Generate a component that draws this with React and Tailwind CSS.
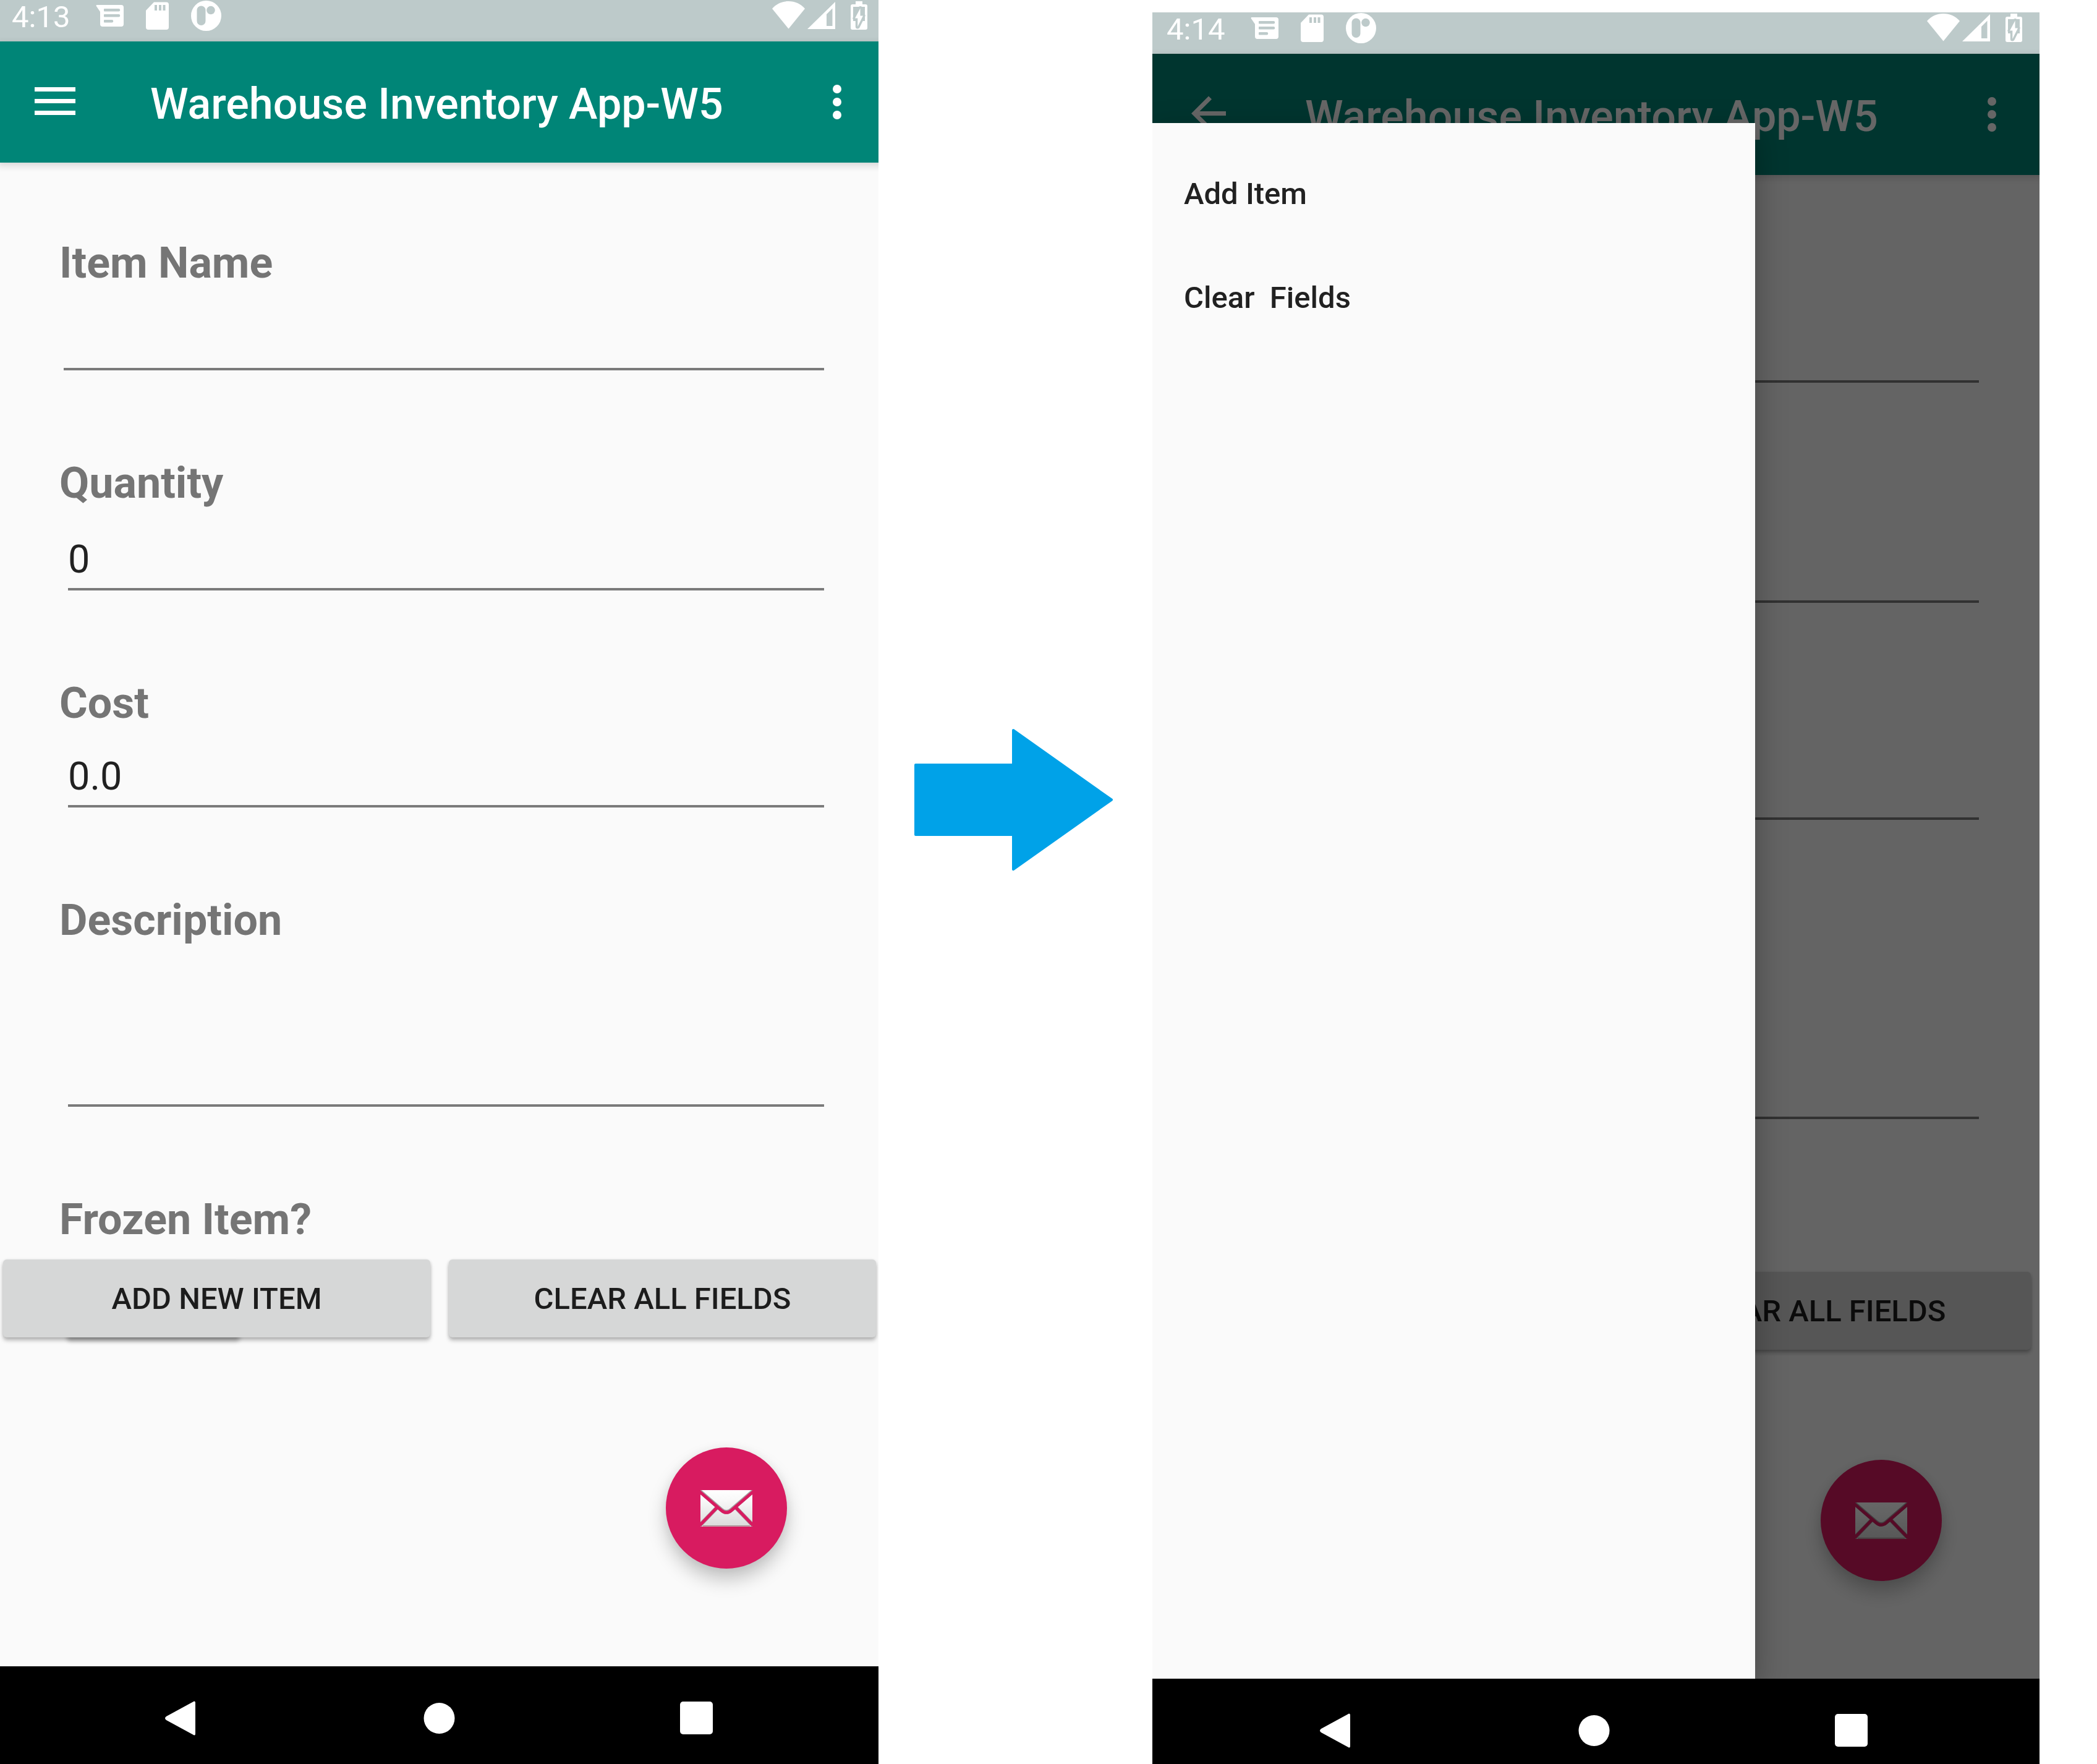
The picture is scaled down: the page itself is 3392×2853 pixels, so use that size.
import { useId } from "react";

function MessageIcon() {
  return (
    <svg className="h-[52px] w-[45px]" viewBox="0 0 45 52" aria-hidden="true">
      <path fill="#fff" d="M1 8H41a4 4 0 0 1 4 4V39a4 4 0 0 1-4 4H11a4 4 0 0 1-4-4V19L0.500 9.500Z" />
      <path
        fill="#bdcaca"
        d="M14 14h23a1.500 1.500 0 0 1 0 4.500H14a1 1 0 0 1-1-1V15a1 1 0 0 1 1-1ZM14 23h23a1.500 1.500 0 0 1 0 4.500H14a1 1 0 0 1-1-1V24a1 1 0 0 1 1-1ZM14 32h12a1.500 1.500 0 0 1 0 4.500H14a1 1 0 0 1-1-1V33a1 1 0 0 1 1-1Z"
      />
    </svg>
  );
}

function SdCardIcon() {
  return (
    <svg className="h-[52px] w-[37px]" viewBox="0 0 37 52" aria-hidden="true">
      <path fill="#fff" d="M13 3.500H33a4 4 0 0 1 4 4V44a4 4 0 0 1-4 4H4a4 4 0 0 1-4-4V17Z" />
      <path fill="#bdcaca" d="M14 8h4v9h-4ZM21 8h4v9h-4ZM27.500 8h4v9h-4Z" />
    </svg>
  );
}

function PBadgeIcon() {
  return (
    <svg className="h-[52px] w-[49px]" viewBox="0 0 49 52" aria-hidden="true">
      <circle cx="24.500" cy="25.500" r="24.500" fill="#fff" />
      <rect x="9.500" y="9.500" width="14" height="31.500" rx="7" fill="#bdcaca" />
      <circle cx="32" cy="16.500" r="6.800" fill="#bdcaca" />
    </svg>
  );
}

function WifiIcon() {
  return (
    <svg className="h-[52px] w-[53px]" viewBox="0 0 53 52" aria-hidden="true">
      <path fill="#fff" d="M0 14C7 6 16 2 26.500 2S46 6 53 14L26.500 46.500Z" />
    </svg>
  );
}

function SignalIcon() {
  return (
    <svg className="h-[52px] w-[45px]" viewBox="0 0 45 52" aria-hidden="true">
      <path fill="#fff" fillRule="evenodd" d="M45 3V47H0ZM40.500 13.500L31 23V42H40.500Z" />
    </svg>
  );
}

function BatteryIcon() {
  return (
    <svg className="h-[52px] w-[27px]" viewBox="0 0 27 52" aria-hidden="true">
      <path
        fill="#fff"
        fillRule="evenodd"
        d="M8 2H19V7H24a3 3 0 0 1 3 3V45a3 3 0 0 1-3 3H3a3 3 0 0 1-3-3V10a3 3 0 0 1 3-3H8ZM4 11V34H23V11Z"
      />
      <path
        d="M15.500 13.500L7 29.500H11.300V43L20 25.500H15.500Z"
        fill="#fff"
        stroke="#bdcaca"
        strokeWidth="7"
        strokeLinejoin="round"
        paintOrder="stroke"
      />
    </svg>
  );
}

function MenuIcon() {
  return (
    <svg className="h-[66px] w-[66px]" viewBox="0 0 66 66" aria-hidden="true">
      <path fill="#fff" d="M0 9H66V16H0ZM0 28H66V35H0ZM0 47H66V54H0Z" />
    </svg>
  );
}

function BackIcon() {
  return (
    <svg className="h-[66px] w-[66px]" viewBox="0 0 66 66" aria-hidden="true">
      <path fill="#fff" d="M59 28V35H16.400L36 54.600L31 59.500L3 31.500L31 3.500L36 8.400L16.400 28Z" />
    </svg>
  );
}

function MoreIcon() {
  return (
    <svg className="h-[66px] w-[14px]" viewBox="0 0 14 66" aria-hidden="true">
      <circle cx="7" cy="12" r="7" fill="#fff" />
      <circle cx="7" cy="33" r="7" fill="#fff" />
      <circle cx="7" cy="54" r="7" fill="#fff" />
    </svg>
  );
}

function EnvelopeIcon() {
  const id = useId();
  return (
    <svg className="h-[59px] w-[84px]" viewBox="0 0 84 59" aria-hidden="true">
      <defs>
        <linearGradient id={id} x1="0" y1="0" x2="0" y2="1">
          <stop offset="0" stopColor="#ffffff" />
          <stop offset="0.300" stopColor="#f8f8f8" />
          <stop offset="1" stopColor="#dadada" />
        </linearGradient>
      </defs>
      <rect width="84" height="59" fill={`url(#${id})`} />
      <path d="M4 57.800H80" stroke="#a9898f" strokeWidth="1.500" />
      <path
        d="M-2 1L34 32Q42 39 50 32L86 1M27 28L-1 57M57 28L85 57"
        fill="none"
        stroke="#a5a0a2"
        strokeWidth="6.500"
      />
      <path
        d="M-2 2L34 33Q42 39.500 50 33L86 2M27 28L-1 57M57 28L85 57"
        fill="none"
        stroke="#d81b60"
        strokeWidth="5"
      />
    </svg>
  );
}

function StatusBar({ time }) {
  return (
    <div className="flex h-[67px] items-start justify-between bg-[#bdcaca] pr-[33px] pl-[23px]">
      <div className="flex items-start">
        <time className="mr-[42px] text-[49px] leading-[56px] text-white">{time}</time>
        <div className="flex gap-9">
          <MessageIcon />
          <SdCardIcon />
          <PBadgeIcon />
        </div>
      </div>
      <div className="flex items-start">
        <div className="mr-[25px] flex gap-1">
          <WifiIcon />
          <SignalIcon />
        </div>
        <BatteryIcon />
      </div>
    </div>
  );
}

function AppBar({ drawerOpen }) {
  return (
    <header className="relative flex h-[196px] items-center bg-[#008577] pr-[75px] pl-[60px] shadow-[0_4px_12px_rgba(0,0,0,0.16)]">
      <button type="button" aria-label={drawerOpen ? "Close menu" : "Open menu"}>
        {drawerOpen ? <BackIcon /> : <MenuIcon />}
      </button>
      <h1 className="mt-1.5 ml-[121px] flex-1 text-[70px] leading-[82px] font-medium whitespace-nowrap text-white">
        Warehouse Inventory App-W5
      </h1>
      <button type="button" aria-label="More options">
        <MoreIcon />
      </button>
    </header>
  );
}

const LABEL = "text-[70px] leading-[82px] font-bold text-[#757575]";
const INPUT =
  "block w-full rounded-none border-b-4 border-[#7a7a7a] bg-transparent pt-[46px] pb-[9px] text-[63px] leading-[74px] text-[#212121] outline-none";

function ItemForm() {
  const id = useId();
  return (
    <form className="flex flex-col gap-[141px] bg-[#fafafa] pt-[121px] pr-[103px] pb-[532px] pl-[100px]">
      <div>
        <label htmlFor={`${id}name`} className={LABEL + " block"}>Item Name</label>
        <div className="pl-[7px]">
          <input id={`${id}name`} type="text" className={INPUT} />
        </div>
      </div>
      <div>
        <label htmlFor={`${id}qty`} className={LABEL + " block"}>Quantity</label>
        <div className="pl-3.5">
          <input id={`${id}qty`} type="text" defaultValue="0" className={INPUT} />
        </div>
      </div>
      <div>
        <label htmlFor={`${id}cost`} className={LABEL + " -mb-[5px] block"}>Cost</label>
        <div className="pl-3.5">
          <input id={`${id}cost`} type="text" defaultValue="0.0" className={INPUT} />
        </div>
      </div>
      <div>
        <label htmlFor={`${id}desc`} className={LABEL + " block"}>Description</label>
        <div className="pl-3.5">
          <textarea id={`${id}desc`} className={INPUT + " h-[261px] resize-none"} />
        </div>
      </div>
      <div>
        <label htmlFor={`${id}frozen`} className={LABEL + " block"}>Frozen Item?</label>
        <div className="pt-6 pl-3">
          <input
            id={`${id}frozen`}
            type="checkbox"
            className="block h-[126px] w-[280px] appearance-none rounded-md bg-[#d6d7d7] shadow-[0_6px_7px_rgba(0,0,0,0.3)]"
          />
        </div>
      </div>
    </form>
  );
}

const RAISED =
  "h-[126px] flex-1 rounded-md bg-[#d6d7d7] pt-0.5 text-[49px] leading-[58px] font-medium whitespace-nowrap text-[#1c1c1c] shadow-[0_5px_6px_rgba(0,0,0,0.25),0_1px_5px_rgba(0,0,0,0.1)]";

function FloatingActions() {
  return (
    <>
      <div className="absolute inset-x-0 bottom-[532px] flex gap-[30px] pr-[19px] pl-[9px]">
        <button type="button" className={RAISED}>ADD NEW ITEM</button>
        <button type="button" className={RAISED}>CLEAR ALL FIELDS</button>
      </div>
      <button
        type="button"
        aria-label="Send mail"
        className="absolute right-[163px] bottom-[158px] flex size-[196px] items-center justify-center rounded-full bg-[#d81b60] shadow-[0_18px_30px_rgba(0,0,0,0.22),0_2px_16px_rgba(0,0,0,0.06)]"
      >
        <EnvelopeIcon />
      </button>
    </>
  );
}

function Drawer() {
  return (
    <>
      <div className="absolute inset-x-0 top-[67px] bottom-0 bg-black/60" />
      <nav
        aria-label="Item actions"
        className="absolute top-[179px] bottom-0 left-0 w-[975px] bg-[#fafafa] pt-[31px] text-[49px] leading-[58px] font-medium text-[#212121] shadow-[0_16px_48px_rgba(0,0,0,0.3)]"
      >
        <button type="button" className="flex h-[168px] w-full items-center px-[51px] whitespace-pre">
          Add Item
        </button>
        <button type="button" className="flex h-[168px] w-full items-center px-[51px] whitespace-pre">
          {"Clear  Fields"}
        </button>
      </nav>
    </>
  );
}

function SystemNav() {
  return (
    <div className="flex flex-1 items-start gap-[361px] bg-black pt-[56px] pl-[269px]">
      <button type="button" aria-label="Back">
        <svg className="block size-[56px]" viewBox="0 0 56 56" aria-hidden="true">
          <path fill="#fff" d="M49 0.500Q51 0 51 3V53Q51 56 49 55.500L4 31Q0 28 4 25Z" />
        </svg>
      </button>
      <button type="button" aria-label="Home">
        <svg className="block size-[56px]" viewBox="0 0 56 56" aria-hidden="true">
          <circle cx="28.500" cy="28" r="25" fill="#fff" />
        </svg>
      </button>
      <button type="button" aria-label="Overview">
        <svg className="block size-[56px]" viewBox="0 0 56 56" aria-hidden="true">
          <rect x="1" y="1" width="53" height="53" rx="5" fill="#fff" />
        </svg>
      </button>
    </div>
  );
}

function Screen({ time, drawerOpen = false }) {
  return (
    <div className="flex flex-1 flex-col">
      <div className="relative overflow-hidden">
        <StatusBar time={time} />
        <AppBar drawerOpen={drawerOpen} />
        <ItemForm />
        <FloatingActions />
        {drawerOpen && <Drawer />}
      </div>
      <SystemNav />
    </div>
  );
}

export default function App() {
  return (
    <main className="flex min-h-screen bg-white pr-[93px] font-['Roboto',sans-serif]">
      <section aria-label="Item form" className="flex min-w-0 flex-[1421] overflow-hidden">
        <div className="-mr-[15px] -ml-1 flex flex-1">
          <Screen time="4:13" />
        </div>
      </section>
      <div className="flex w-[443px] shrink-0 items-start pt-[1179px] pl-[58px]">
        <svg className="h-[229px] w-[321px]" viewBox="0 0 321 229" role="img" aria-label="leads to">
          <path
            d="M2 58H160V2L319 114.500L160 227V171H2Z"
            fill="#00a2e8"
            stroke="#00a2e8"
            strokeWidth="4"
            strokeLinejoin="round"
          />
        </svg>
      </div>
      <section aria-label="Item form with menu open" className="flex min-w-0 flex-[1435] overflow-hidden pt-5">
        <div className="-mr-[5px] flex flex-1">
          <Screen time="4:14" drawerOpen />
        </div>
      </section>
    </main>
  );
}
